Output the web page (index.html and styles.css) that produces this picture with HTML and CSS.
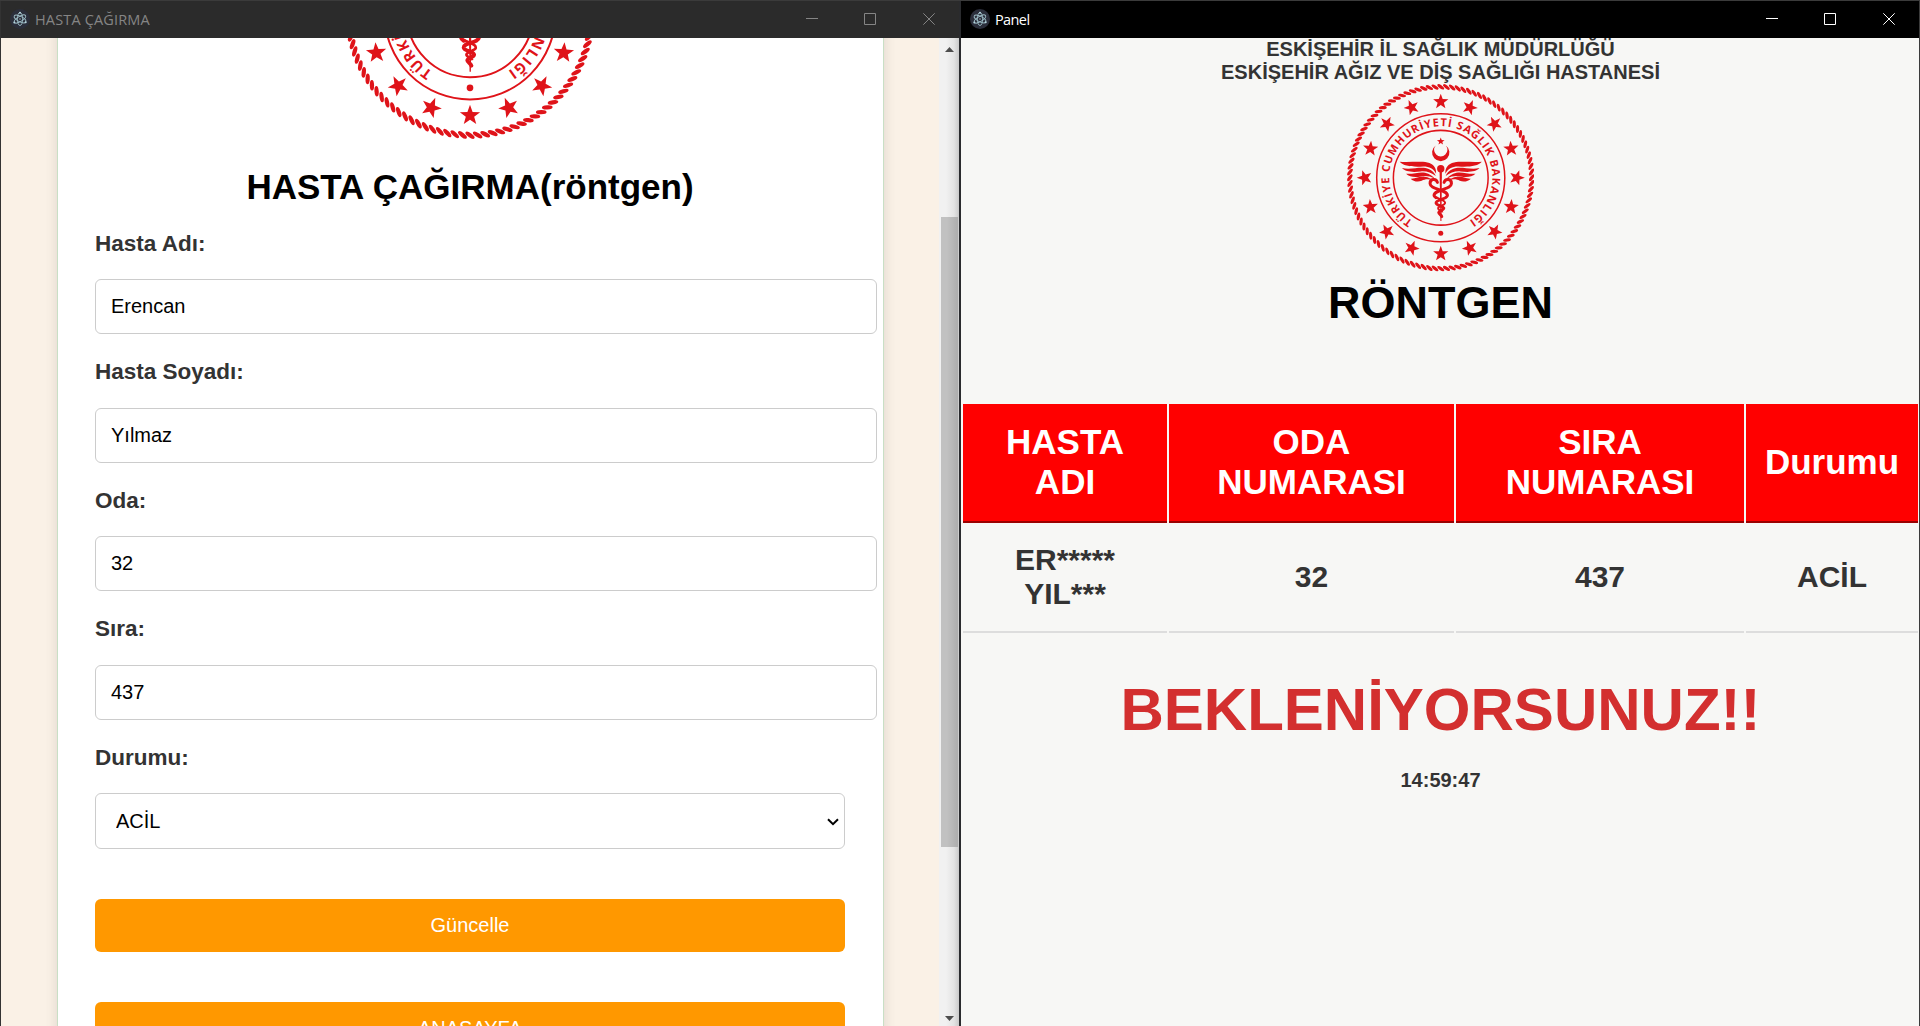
FILE: index.html
```html
<!DOCTYPE html>
<html lang="tr">
<head>
<meta charset="utf-8">
<title>HASTA ÇAĞIRMA</title>
<link rel="stylesheet" href="styles.css">
</head>
<body>
<svg class="defs" width="0" height="0" aria-hidden="true">
  <defs>
    <polygon id="star" points="0,-24 5.8,-7.8 22.8,-7.4 9.4,3 14,19.400 0,10 -14,19.400 -9.400,3 -22.800,-7.400 -5.800,-7.800"/>
    <path id="ring-text" d="M-83.500,130 A154.500,154.500 0 1 1 83.500,130"/>
    <g id="wing">
      <path d="M-123-48C-95-46-62-50-40-46C-22-42-12-30-14-12C-21-27-34-34-52-34C-82-32-112-34-123-48Z"/>
      <path d="M-116-29C-92-24-66-32-46-29C-29-25-20-17-15-5C-28-15-44-21-60-19C-82-16-106-17-116-29Z"/>
      <path d="M-104-12C-82-10-64-19-47-15C-33-11-24-5-18 2C-32-5-46-7-60-4C-76 0-94-2-104-12Z"/>
      <path d="M-90 3C-74 4-62-6-48-3C-37-1-28 3-24 7C-38 3-48 4-57 9C-68 14-83 11-90 3Z"/>
    </g>
    <g id="snake" fill="none" stroke="#df1319" stroke-width="9" stroke-linecap="round">
      <path d="M-10 14C-14 1-33 3-32 18C-31 30-12 32 4 39C22 46 24 54 14 60C2 66-15 67-14 76C-13 83 6 84 9 91C10 97-5 98-6 104C-6 109 2 111 3 116" />
    </g>
    <symbol id="seal" viewBox="-281 -281 562 562">
      <g fill="none" stroke="#df1319">
        <circle r="192" stroke-width="4.500"/>
        <circle r="142" stroke-width="4.500"/>
      </g>
      <g id="rope" fill="#df1319"></g>
      <g id="stars" fill="#df1319"></g>
      <text class="seal-text"><textPath href="#ring-text" textLength="792" lengthAdjust="spacing">TÜRKİYE CUMHURİYETİ SAĞLIK BAKANLIĞI</textPath></text>
      <g fill="#df1319">
        <circle cy="166" r="7.500"/>
        <use href="#star" transform="translate(0,-109) scale(.5)"/>
        <path d="M-15-97A26 26 0 1 0 15-97A20 20 0 1 1-15-97Z"/>
        <circle cy="-27" r="11"/>
        <path d="M-3.500-20H3.500L2 130H-1Z"/>
        <use href="#wing"/>
        <use href="#wing" transform="scale(-1,1)"/>
      </g>
      <use href="#snake"/>
      <path d="M10 14C14 1 33 3 32 18C31 30 12 32-4 39C-22 46-24 54-14 60" fill="none" stroke="#df1319" stroke-width="9" stroke-linecap="round"/>
      <path d="M-14 58C-2 66 14 67 13 76C12 83-6 84-8 91C-9 97 4 98 5 104" fill="none" stroke="#df1319" stroke-width="6"/>
    </symbol>
    <symbol id="atom" viewBox="0 0 20 20">
      <circle class="atom-disc" cx="10" cy="10" r="10"/>
      <g fill="none" stroke="#9dbcc6" stroke-width=".9">
        <ellipse cx="10" cy="10" rx="6.500" ry="2.600" transform="rotate(28 10 10)"/>
        <ellipse cx="10" cy="10" rx="6.500" ry="2.600" transform="rotate(-32 10 10)"/>
        <ellipse cx="10" cy="10" rx="6.500" ry="2.700" transform="rotate(90 10 10)"/>
      </g>
      <g fill="#b4d3dc"><circle cx="10" cy="10" r=".7"/><circle cx="10" cy="3.800" r="1"/><circle cx="4.300" cy="13.500" r="1"/><circle cx="15.700" cy="13.300" r="1"/></g>
    </symbol>
    <symbol id="win-min" viewBox="0 0 12 12"><path d="M0 5.500H12"/></symbol>
    <symbol id="win-max" viewBox="0 0 12 12"><path d="M.5.500H11.500V11.500H.5Z"/></symbol>
    <symbol id="win-close" viewBox="0 0 12 12"><path d="M.3.300L11.700 11.700M11.700.300L.3 11.700"/></symbol>
  </defs>
</svg>

<div class="desktop">
  <section class="window window-form">
    <header class="titlebar">
      <svg class="app-icon"><use href="#atom"/></svg>
      <span class="titlebar-text">HASTA ÇAĞIRMA</span>
      <div class="controls">
        <svg><use href="#win-min"/></svg>
        <svg><use href="#win-max"/></svg>
        <svg class="close"><use href="#win-close"/></svg>
      </div>
    </header>
    <div class="form-view">
      <main class="form-page">
        <form class="card">
          <svg class="seal seal-large"><use href="#seal"/></svg>
          <h1 class="form-title">HASTA ÇAĞIRMA(röntgen)</h1>
          <label class="label" for="ad">Hasta Adı:</label>
          <input class="input" id="ad" type="text" value="Erencan">
          <label class="label" for="soyad">Hasta Soyadı:</label>
          <input class="input" id="soyad" type="text" value="Yılmaz">
          <label class="label" for="oda">Oda:</label>
          <input class="input" id="oda" type="text" value="32">
          <label class="label" for="sira">Sıra:</label>
          <input class="input" id="sira" type="text" value="437">
          <label class="label" for="durum">Durumu:</label>
          <div class="select-wrap">
            <select class="select" id="durum"><option>ACİL</option></select>
            <svg class="chevron" viewBox="0 0 12 8"><path d="M1 1.300L6 6.200L11 1.300"/></svg>
          </div>
          <button class="button" type="button">Güncelle</button>
          <button class="button" type="button">ANASAYFA</button>
        </form>
      </main>
      <div class="scrollbar">
        <svg class="arrow" viewBox="0 0 9 5"><path d="M4.500 0L9 5H0Z"/></svg>
        <div class="thumb"></div>
        <svg class="arrow" viewBox="0 0 9 5"><path d="M0 0H9L4.500 5Z"/></svg>
      </div>
    </div>
  </section>

  <section class="window window-panel">
    <header class="titlebar">
      <svg class="app-icon"><use href="#atom"/></svg>
      <span class="titlebar-text">Panel</span>
      <div class="controls">
        <svg><use href="#win-min"/></svg>
        <svg><use href="#win-max"/></svg>
        <svg class="close"><use href="#win-close"/></svg>
      </div>
    </header>
    <main class="panel">
      <div class="panel-head">
        <p class="org">ESKİŞEHİR İL SAĞLIK MÜDÜRLÜĞÜ</p>
        <p class="org">ESKİŞEHİR AĞIZ VE DİŞ SAĞLIĞI HASTANESİ</p>
        <svg class="seal"><use href="#seal"/></svg>
        <h1 class="unit">RÖNTGEN</h1>
      </div>
      <table class="queue">
        <colgroup><col class="c-name"><col class="c-room"><col class="c-no"><col class="c-state"></colgroup>
        <thead>
          <tr><th>HASTA<br>ADI</th><th>ODA<br>NUMARASI</th><th>SIRA<br>NUMARASI</th><th>Durumu</th></tr>
        </thead>
        <tbody>
          <tr><td>ER*****<br>YIL***</td><td>32</td><td>437</td><td>ACİL</td></tr>
        </tbody>
      </table>
      <p class="notice">BEKLENİYORSUNUZ!!</p>
      <p class="clock">14:59:47</p>
    </main>
  </section>
</div>
<script src="seal.js"></script>
</body>
</html>
```
FILE: seal.js
```js
// Fills the seal symbol with its repeated parts: 16 stars and the rope border.
const NS = 'http://www.w3.org/2000/svg';
const stars = document.getElementById('stars');
for (let i = 0; i < 16; i++) {
  const angle = i * 22.5;
  const rad = angle * Math.PI / 180;
  const lower = angle > 90 && angle < 270;
  const star = document.createElementNS(NS, 'use');
  star.setAttribute('href', '#star');
  star.setAttribute('transform',
    `translate(${228 * Math.sin(rad)},${-228 * Math.cos(rad)}) rotate(${lower ? angle - 180 : angle})`);
  stars.appendChild(star);
}
const rope = document.getElementById('rope');
const strands = 100;
for (let i = 0; i < strands; i++) {
  const strand = document.createElementNS(NS, 'ellipse');
  strand.setAttribute('rx', '12');
  strand.setAttribute('ry', '4.8');
  strand.setAttribute('transform', `rotate(${i * 360 / strands}) translate(0,-272.5) rotate(35)`);
  rope.appendChild(strand);
}
```
FILE: styles.css
```css
* { box-sizing: border-box; }

body {
  margin: 0;
  background: #2a2b2e;
  color: #333;
  font-family: "Liberation Sans", Arial, sans-serif;
}

p, h1 { margin: 0; }

.defs { position: absolute; }

.desktop {
  display: flex;
  gap: 2px;
  height: 1026px;
  overflow: hidden;
  border-top: 1px solid #3b3b3b;
}

.window {
  display: flex;
  flex-direction: column;
  min-width: 0;
}

.window-form {
  width: 959px;
  border-left: 1px solid #333;
}

.window-panel {
  width: 959px;
  border-right: 1px solid #3b3b3b;
}

/* Title bars */
.titlebar {
  display: flex;
  flex: none;
  align-items: center;
  height: 37px;
  padding: 0 24px 0 9px;
  background: #000;
  color: #fff;
}

.window-form .titlebar {
  background: #2b2b2b;
  color: #858585;
}

.app-icon { width: 20px; height: 20px; margin-bottom: 1px; }
.atom-disc { fill: #2b2e3b; }

.titlebar-text {
  margin-left: 5px;
  font: 14.5px/20px "Open Sans", "Noto Sans", sans-serif;
  letter-spacing: -0.6px;
}

.window-form .titlebar-text { letter-spacing: 0.15px; }

.controls {
  display: flex;
  gap: 46px;
  margin-left: auto;
  margin-bottom: 1px;
}

.controls svg {
  width: 12px;
  height: 12px;
  fill: none;
  stroke: currentColor;
  stroke-width: 1;
}

.controls .close { margin-left: 1px; }

/* Form window */
.form-view {
  display: flex;
  flex: 1;
  min-height: 0;
}

.form-page {
  flex: 1;
  overflow: hidden;
  background: #faf1e6;
}

.card {
  display: flex;
  flex-direction: column;
  width: 827px;
  height: 1300px;
  margin: -200px 0 0 56px;
  padding: 50px 38px 0 37px;
  border: 1px solid #c9dfc5;
  background: #fff;
  box-shadow: 0 0 12px rgba(0, 0, 0, .12);
}

.seal {
  display: block;
  flex: none;
  width: 187.5px;
  height: 187.5px;
  margin: 0 auto;
}

.seal-large { width: 250px; height: 250px; }

.seal-text {
  fill: #df1319;
  font: 700 33px "Open Sans", "Noto Sans", sans-serif;
}

.form-title {
  margin: 28px 0 23.5px;
  color: #000;
  font-size: 35px;
  line-height: 40px;
  text-align: center;
}

.label {
  margin-bottom: 22.5px;
  font-size: 22.5px;
  font-weight: 700;
  line-height: 26px;
}

.input, .select {
  flex: none;
  border: 1px solid #ccc;
  border-radius: 6px;
  background: #fff;
  color: #000;
  font: 20px/23px "Liberation Sans", Arial, sans-serif;
}

.input {
  width: 782px;
  height: 55px;
  margin: 0 0 25px;
  padding: 0 15px;
}

.select-wrap { position: relative; margin: -0.5px 0 50px; }

.select {
  display: block;
  width: 100%;
  height: 56px;
  padding: 1px 20px 0;
  appearance: none;
}

.chevron {
  position: absolute;
  top: 25px;
  right: 6px;
  width: 12px;
  height: 8px;
  fill: none;
  stroke: #000;
  stroke-width: 2;
}

.button {
  flex: none;
  height: 53px;
  margin: 0 0 50px;
  border: 0;
  border-radius: 6px;
  background: #ff9800;
  color: #fff;
  font: 20px/23px "Liberation Sans", Arial, sans-serif;
}

/* Scrollbar */
.scrollbar {
  display: flex;
  flex-direction: column;
  align-items: center;
  width: 20px;
  padding: 9px 0 5px;
  background: linear-gradient(to right, #f1f1f1 35%, #e3e3e3 75%, #cacaca);
}

.arrow { width: 9px; height: 5px; fill: #4d4d4d; }

.thumb {
  width: 17px;
  height: 630px;
  margin: 165px 0 auto;
  background: linear-gradient(to right, #c1c1c1 35%, #adadad);
}

/* Panel window */
.panel {
  flex: 1;
  overflow: hidden;
  background: #f7f7f5;
  text-align: center;
}

.panel-head { padding-left: 1px; }

.org {
  font-size: 20px;
  font-weight: 700;
  line-height: 23px;
}

.unit {
  margin: 5px 0 73.5px;
  color: #000;
  font-size: 45px;
  line-height: 52px;
}

.queue {
  width: 959px;
  table-layout: fixed;
  border-spacing: 2px;
  font-weight: 700;
}

.c-name { width: 204px; }
.c-room { width: 285px; }
.c-no { width: 288px; }
.c-state { width: 172px; }

.queue th {
  height: 119px;
  padding: 0 0 2px;
  border-bottom: 2px solid #9b0000;
  background: #f00;
  color: #fff;
  font-size: 35px;
  line-height: 40px;
}

.queue td {
  height: 108px;
  padding: 0 0 2px;
  border-bottom: 2px solid #ddd;
  font-size: 30px;
  line-height: 34px;
}

.notice {
  margin-top: 40px;
  padding-left: 1px;
  color: #d32f2f;
  font-size: 60px;
  font-weight: 700;
  line-height: 69px;
}

.clock {
  margin-top: 25px;
  padding-left: 1px;
  font-size: 20px;
  font-weight: 700;
  line-height: 23px;
}
```
